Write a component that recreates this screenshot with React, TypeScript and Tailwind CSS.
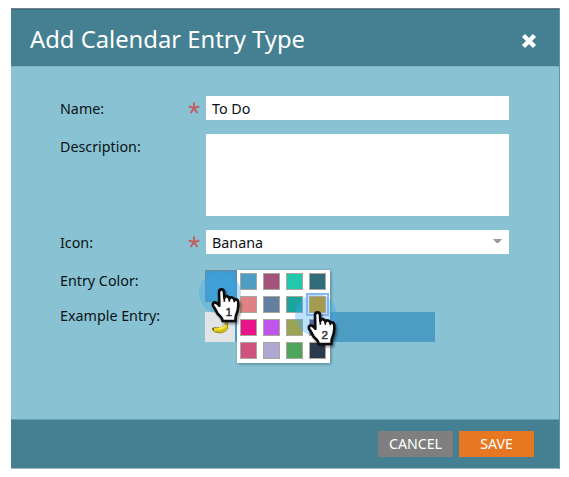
import type { ReactNode } from "react";

const SWATCHES = [
  "bg-[#4d9cc3]", "bg-[#a4537a]", "bg-[#20c9ac]", "bg-[#306d7a]",
  "bg-[#e08285]", "bg-[#627f9f]", "bg-[#1ba39c]", "bg-[#a39b50]",
  "bg-[#e81588]", "bg-[#bf55ec]", "bg-[#9ba455]", "bg-[#674172]",
  "bg-[#d2527f]", "bg-[#aea8d3]", "bg-[#50a55c]", "bg-[#2b3b4f]",
];

const HAND =
  "M56 82Q56 73 63.500 73Q71 73 71 82L72 99Q75 92 81 94Q86 95 87 101Q91 95 97 98Q102 100 102 105Q108 101 112 106Q115 111 114 122Q113 138 109 146Q105 153 105 168H67Q66 160 59 153Q51 147 47 137Q43 129 38 122Q36 114 43 112Q50 112 57 122Z";

function Hand({ label }: { label: string }) {
  return (
    <svg width="38" height="46" viewBox="26 60 114 138" className="block overflow-visible">
      <path d={HAND} fill="#000" stroke="#000" strokeWidth="8" opacity=".4" transform="translate(5 6)" style={{ filter: "blur(3px)" }} />
      <path d={HAND} fill="#fff" stroke="#0c0c0c" strokeWidth="8" strokeLinejoin="round" />
      <path d="M72 97V110M87 100V110M102 105V112" stroke="#111" strokeWidth="5" fill="none" />
      <text x="85" y="154" textAnchor="middle" fontSize="35" fill="#333" stroke="#333" strokeWidth="1.500" fontFamily="Liberation Sans, sans-serif">
        {label}
      </text>
    </svg>
  );
}

function Banana() {
  return (
    <svg width="18" height="14" viewBox="0 0 54 42" className="block">
      <path d="M45 3L50 5L49 12Q54 23 44 30Q32 40 15 34Q3 31 4 22Q9 18 17 20Q35 22 43 10Z" fill="#ecd51d" stroke="#8a7d20" strokeWidth="2.500" />
      <path d="M15 31Q36 34 46 20" stroke="#a48e12" strokeWidth="2" fill="none" />
      <path d="M20 23Q36 22 44 12" stroke="#fff15c" strokeWidth="4" fill="none" />
      <path d="M4 22L8 21L9 28L5 27Z" fill="#5d5018" />
    </svg>
  );
}

function Row({ label, required, className, children }: { label: string; required?: boolean; className: string; children: ReactNode }) {
  return (
    <div className={`flex ${className}`}>
      <div className="w-[127px] shrink-0 pt-[3px] whitespace-nowrap">{label}</div>
      <div className="w-[18px] shrink-0 pt-[6px] pl-px">
        {required && (
          <svg width="12" height="12" viewBox="0 0 12 12" className="block">
            <path d="M6 6V.500M6 6L.700 4.500M6 6L11.300 4.500M6 6L2.700 11M6 6L9.300 11" stroke="#c35e60" strokeWidth="2" />
          </svg>
        )}
      </div>
      {children}
    </div>
  );
}

export default function App() {
  return (
    <div className="h-[477px] w-[569px] bg-white pt-2 pl-[11px] font-['Noto_Sans',sans-serif] text-[14.300px] leading-5 text-[#0b1214]">
      <div className="flex h-[461px] w-[549px] flex-col border-t border-r border-t-[#727f82] border-r-[#5a98a9] bg-[#89c2d3]">
        <header className="flex h-[57px] shrink-0 items-center justify-between border-t border-[#356f80] bg-[#458092] pr-[22px] pl-[19px]">
          <h1 className="mt-[2px] text-[23.800px] leading-8 whitespace-nowrap text-white">Add Calendar Entry Type</h1>
          <svg width="16" height="16" viewBox="0 0 16 16" className="mt-[5px]">
            <path d="M2.500 2.500L13.500 13.500M13.500 2.500L2.500 13.500" stroke="white" strokeWidth="4.400" />
          </svg>
        </header>
        <main className="h-[353px] shrink-0 border-t border-[#7db4c5] pt-[29px] pl-[49px]">
          <Row label="Name:" required className="h-[38px]">
            <div className="ml-px h-6 w-[303px] bg-white pt-[3px] pl-1.5">To Do</div>
          </Row>
          <Row label="Description:" className="h-24">
            <div className="ml-px h-[82px] w-[303px] bg-white" />
          </Row>
          <Row label="Icon:" required className="h-10">
            <div className="ml-px flex h-6 w-[303px] justify-between bg-white pt-[3px] pr-[7px] pl-1.5">
              <span>Banana</span>
              <svg width="9" height="5" viewBox="0 0 9 5" className="mt-[6px]">
                <path d="M0 0H9L5.500 4H3.500Z" fill="#969a9c" />
              </svg>
            </div>
          </Row>
          <Row label="Entry Color:" className="-mt-[2px] h-[43px]">
            <div className="relative mt-[2px] h-8 w-8 border border-[#708997] bg-[#409bcf]">
              <div className="absolute top-[-1px] left-[31px] z-10 grid h-[93px] w-[93px] grid-cols-[repeat(4,17px)] grid-rows-[repeat(4,17px)] gap-[6px] bg-white pt-[3px] pl-[3px] shadow-[1px_1px_3px_#527f8f]">
                {SWATCHES.map((color, i) => (
                  <span key={color} className={`border border-[#aaa69a] ${color} ${i === 7 ? "relative z-10 outline-2 outline-offset-1 outline-[#83b6f1]" : ""}`} />
                ))}
                <div className="absolute top-[24px] left-[58px] size-[42px] rounded-full bg-[#40a8f8]/35" />
              </div>
              <div className="absolute top-[1px] left-[-7px] z-20 size-[42px] rounded-full bg-[#40a8e8]/35" />
              <div className="absolute top-[14px] left-[3px] z-30"><Hand label="1" /></div>
              <div className="absolute top-[37px] left-[99px] z-30"><Hand label="2" /></div>
            </div>
          </Row>
          <Row label="Example Entry:" className="-mt-2 h-10">
            <div className="mt-[9px] flex h-[30px] w-[230px] bg-[#4d9cc3]">
              <div className="h-full w-[30px] bg-[#e2e4e5] pt-[9px] pl-[6px]"><Banana /></div>
            </div>
          </Row>
        </main>
        <footer className="flex h-[50px] shrink-0 justify-end gap-1.5 border-t border-b border-t-[#649fad] border-b-[#9bb8c1] bg-[#458092] pt-[11px] pr-[25px] text-[14.200px] text-white">
          <button className="h-[26px] w-[75px] bg-[#7f7f7f]">CANCEL</button>
          <button className="h-[26px] w-[75px] bg-[#e87722]">SAVE</button>
        </footer>
      </div>
    </div>
  );
}
